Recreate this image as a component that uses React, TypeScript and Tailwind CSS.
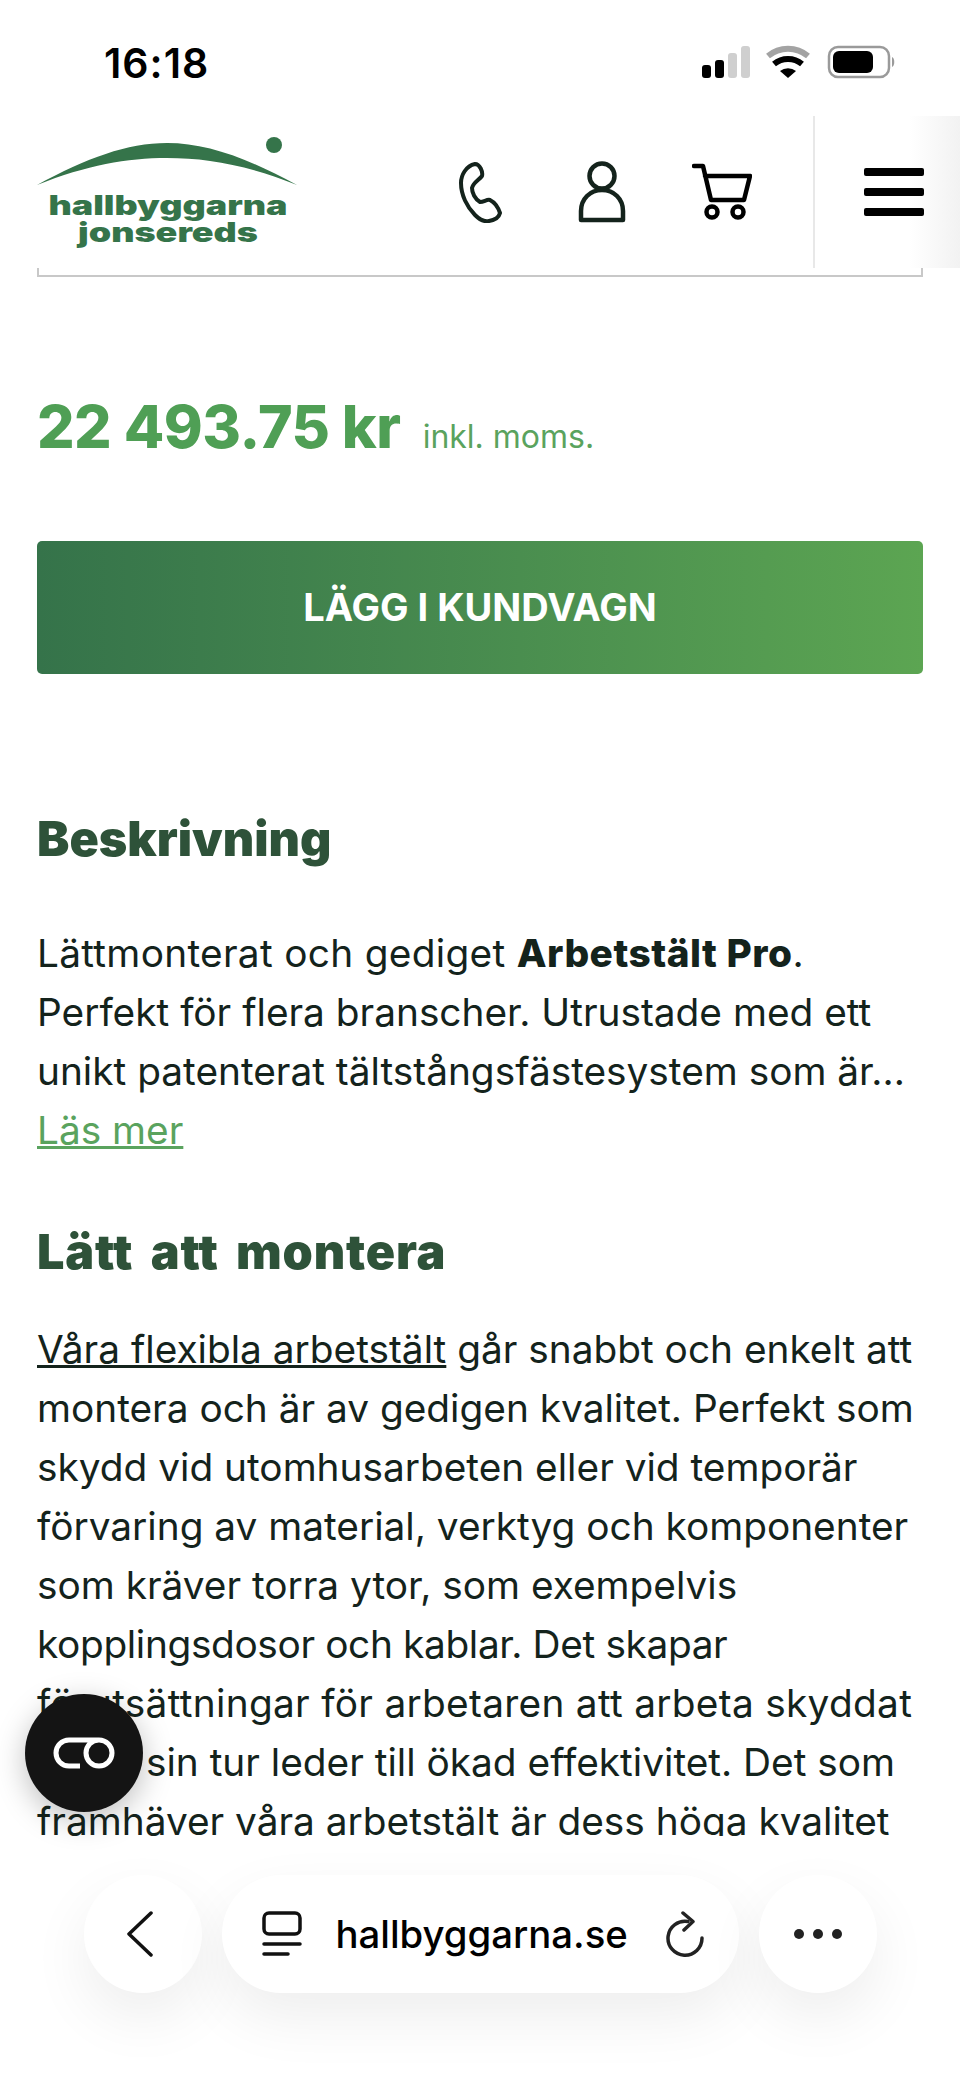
import React from "react";

const font = { fontFamily: "Inter, 'Noto Sans', sans-serif" };

function StatusBar() {
  return (
    <div className="flex h-[116px] items-start justify-between pl-[104px] pr-[65px] pt-[39px]">
      <span className="text-[41px] font-semibold leading-[48px] tracking-[1px] text-black">16:18</span>
      <svg width="195" height="34" viewBox="0 0 195 34" className="mt-[6px]">
        <rect x="2" y="20" width="9" height="13" rx="3" fill="#000" />
        <rect x="15" y="15" width="9" height="18" rx="3" fill="#000" />
        <rect x="28" y="8" width="9" height="25" rx="3" fill="#cfcfcf" />
        <rect x="41" y="1" width="9" height="32" rx="3" fill="#cfcfcf" />
        <path d="M68 11 A31 31 0 0 1 108 11" fill="none" stroke="#a3a3a3" strokeWidth="6" />
        <path d="M74 19 A22 22 0 0 1 102 19" fill="none" stroke="#000" strokeWidth="6" />
        <path d="M80 26 L88 33 L96 26 A13 13 0 0 0 80 26 Z" fill="#000" />
        <rect x="129" y="2" width="60" height="30" rx="9" fill="none" stroke="#9a9a9a" strokeWidth="2.5" />
        <rect x="133" y="6" width="40" height="22" rx="6" fill="#000" />
        <path d="M192 12 C195 13 195 21 192 22 Z" fill="#9a9a9a" />
      </svg>
    </div>
  );
}

function Logo() {
  return (
    <div className="relative h-[110px] w-[262px]">
      <svg width="262" height="66" viewBox="0 0 262 66" className="absolute left-0 top-0">
        <path d="M0 52 C50 25 90 10 130 10 C170 10 210 25 260 52 C210 32 170 25 130 25 C90 25 50 32 0 52 Z" fill="#35744a" />
        <circle cx="237" cy="12" r="8" fill="#35744a" />
      </svg>
      <div className="absolute left-0 top-[59px] w-[262px] scale-x-[1.33] text-center text-[27px] font-black leading-[27px] text-[#35744a]">
        <div>hallbyggarna</div>
        <div>jonsereds</div>
      </div>
    </div>
  );
}

function Header() {
  return (
    <div className="flex h-[152px] items-center bg-white pl-[37px]">
      <div className="-mt-[8px]">
        <Logo />
      </div>
      <div className="ml-[159px] flex items-center">
        <svg width="46" height="62" viewBox="0 0 46 62" fill="none" stroke="#14231c" strokeWidth="4" strokeLinejoin="round">
          <path d="M17 3 C8 5 3 14 3 22 C3 34 9 46 17 54 C22 59 27 61 31 60 C37 59 41 56 42 52 C40 46 36 41 32 39 C29 38 26 41 22 41 C17 38 14 32 14 27 C15 22 21 19 24 15 C25 11 22 3 17 3 Z" />
        </svg>
        <svg width="48" height="62" viewBox="0 0 48 62" fill="none" stroke="#14231c" strokeWidth="4.5" className="ml-[74px]" strokeLinejoin="round">
          <circle cx="24" cy="15" r="12.5" />
          <path d="M3 59 V50 C3 38 12 29 24 29 C36 29 45 38 45 50 V59 Z" />
        </svg>
        <svg width="60" height="58" viewBox="0 0 60 58" fill="none" stroke="#000" strokeWidth="4.5" className="ml-[66px]" strokeLinejoin="round" strokeLinecap="round">
          <path d="M2 3 H11 L19 37 H52 L58 13 H13" />
          <circle cx="20" cy="49" r="5.5" />
          <circle cx="46" cy="49" r="5.5" />
        </svg>
      </div>
      <div className="ml-[61px] h-full w-[2px] bg-[#e8e8e8]" />
      <div className="flex h-full flex-1 items-center bg-gradient-to-r from-white from-[65%] to-[#f2f2f2] pl-[49px]">
        <div className="flex w-[60px] flex-col gap-[12px]">
          <div className="h-[8px] rounded-[2px] bg-black" />
          <div className="h-[8px] rounded-[2px] bg-black" />
          <div className="h-[8px] rounded-[2px] bg-black" />
        </div>
      </div>
    </div>
  );
}

function Toolbar() {
  return (
    <div className="flex h-[242px] justify-center gap-[20px] bg-white pt-[39px]">
      <div className="flex h-[118px] w-[118px] items-center justify-center rounded-full bg-white shadow-[0_24px_60px_rgba(0,0,0,0.07)]">
        <svg width="28" height="46" viewBox="0 0 28 46" fill="none" stroke="#111" strokeWidth="3.5" strokeLinecap="round" strokeLinejoin="round" className="-ml-[6px]">
          <path d="M25 2 L3 23 L25 44" />
        </svg>
      </div>
      <div className="flex h-[118px] w-[517px] items-center rounded-[59px] bg-white pl-[40px] shadow-[0_24px_60px_rgba(0,0,0,0.07)]">
        <svg width="40" height="46" viewBox="0 0 40 46" fill="none" stroke="#111" strokeWidth="3.5" strokeLinecap="round">
          <rect x="2" y="2" width="36" height="21" rx="5" />
          <path d="M2 33 H38 M2 43 H26" />
        </svg>
        <span className="ml-[34px] text-[38.3px] font-medium leading-none text-black">hallbyggarna.se</span>
        <svg width="38" height="46" viewBox="0 0 38 46" fill="none" stroke="#222" strokeWidth="3.5" strokeLinecap="round" strokeLinejoin="round" className="ml-[38px]">
          <path d="M22 10.5 A17 17 0 1 0 36 27" />
          <path d="M17 2 L27 10.5 L18 19" />
        </svg>
      </div>
      <div className="flex h-[118px] w-[118px] items-center justify-center gap-[9px] rounded-full bg-white shadow-[0_24px_60px_rgba(0,0,0,0.07)]">
        <div className="h-[10px] w-[10px] rounded-full bg-[#222]" />
        <div className="h-[10px] w-[10px] rounded-full bg-[#222]" />
        <div className="h-[10px] w-[10px] rounded-full bg-[#222]" />
      </div>
    </div>
  );
}

export default function App() {
  return (
    <div className="relative flex h-[2078px] w-[960px] flex-col overflow-hidden bg-white" style={font}>
      <StatusBar />
      <Header />
      <div className="h-[1568px] overflow-hidden px-[37px]">
        <div className="h-[9px] border-x-2 border-b-2 border-[#c8c8c8]" />
        <div className="mt-[115px] flex items-baseline">
          <span className="text-[59px] font-extrabold leading-[70px] tracking-[-0.5px] text-[#4f9f55]">22 493.75 kr</span>
          <span className="ml-[22px] text-[32px] leading-none text-[#5aa35e]">inkl. moms.</span>
        </div>
        <button className="mt-[79px] flex h-[133px] w-full items-center justify-center rounded-[5px] bg-gradient-to-r from-[#35734a] to-[#5ca552] text-[38px] font-bold text-white">
          LÄGG I KUNDVAGN
        </button>
        <h2 className="mt-[135px] text-[48.5px] font-black leading-[60px] text-[#2e5239]">Beskrivning</h2>
        <p className="mt-[54px] text-[38.8px] leading-[59px] text-[#14231c]">
          <span className="tracking-[0.3px]">Lättmonterat och gediget </span>
          <b className="font-extrabold tracking-[0.5px]">Arbetstält Pro</b>.<br />
          Perfekt för flera branscher. Utrustade med ett<br />
          unikt patenterat tältstångsfästesystem som är...
        </p>
        <a className="block text-[38.8px] leading-[59px] text-[#5aa35e] underline">Läs mer</a>
        <h2 className="mt-[63px] text-[48.5px] font-black leading-[60px] tracking-[0.8px] text-[#2e5239] [word-spacing:7px]">Lätt att montera</h2>
        <p className="mt-[37px] text-[38.8px] leading-[59px] text-[#14231c]">
          <span className="underline">Våra flexibla arbetstält</span> går snabbt och enkelt att<br />
          montera och är av gedigen kvalitet. Perfekt som<br />
          skydd vid utomhusarbeten eller vid temporär<br />
          förvaring av material, verktyg och komponenter<br />
          som kräver torra ytor, som exempelvis<br />
          <span className="tracking-[-0.35px]">kopplingsdosor och kablar. Det skapar</span><br />
          <span className="tracking-[0.3px]">förutsättningar för arbetaren att arbeta skyddat</span><br />
          som i sin tur leder till ökad effektivitet. Det som<br />
          framhäver våra arbetstält är dess höga kvalitet
        </p>
      </div>
      <Toolbar />
      <div className="absolute left-[25px] top-[1694px] flex h-[118px] w-[118px] items-center justify-center rounded-full bg-[#141414] shadow-[0_8px_30px_rgba(0,0,0,0.25)]">
        <svg width="62" height="32" viewBox="0 0 62 32" fill="none" stroke="#fff" strokeWidth="5">
          <path d="M27 29 H16 A13 13 0 0 1 16 3 H46 A13 13 0 0 1 46 29 A13 13 0 0 1 46 3" />
        </svg>
      </div>
    </div>
  );
}
